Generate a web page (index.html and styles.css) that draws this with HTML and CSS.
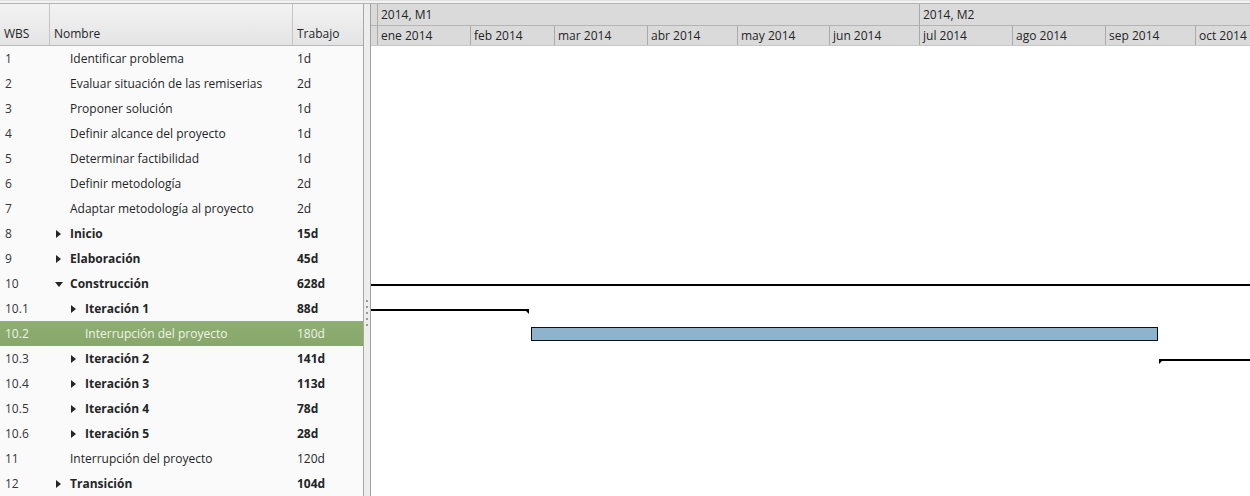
FILE: index.html
```html
<!DOCTYPE html>
<html lang="es">
<head>
<meta charset="utf-8">
<title>Gantt</title>
<link rel="stylesheet" href="styles.css">
</head>
<body>
<div class="frame-top"></div>
<div class="app">
  <section class="tree">
    <div class="thead">
      <div class="th c-wbs">WBS</div>
      <div class="th c-name">Nombre</div>
      <div class="th c-work">Trabajo</div>
    </div>
    <div class="tbody">
      <div class="row"><div class="c-wbs">1</div><div class="c-name l1"><span class="tw"></span>Identificar problema</div><div class="c-work">1d</div></div>
      <div class="row"><div class="c-wbs">2</div><div class="c-name l1"><span class="tw"></span>Evaluar situación de las remiserias</div><div class="c-work">2d</div></div>
      <div class="row"><div class="c-wbs">3</div><div class="c-name l1"><span class="tw"></span>Proponer solución</div><div class="c-work">1d</div></div>
      <div class="row"><div class="c-wbs">4</div><div class="c-name l1"><span class="tw"></span>Definir alcance del proyecto</div><div class="c-work">1d</div></div>
      <div class="row"><div class="c-wbs">5</div><div class="c-name l1"><span class="tw"></span>Determinar factibilidad</div><div class="c-work">1d</div></div>
      <div class="row"><div class="c-wbs">6</div><div class="c-name l1"><span class="tw"></span>Definir metodología</div><div class="c-work">2d</div></div>
      <div class="row"><div class="c-wbs">7</div><div class="c-name l1"><span class="tw"></span>Adaptar metodología al proyecto</div><div class="c-work">2d</div></div>
      <div class="row group"><div class="c-wbs">8</div><div class="c-name l1"><span class="tw right"></span>Inicio</div><div class="c-work">15d</div></div>
      <div class="row group"><div class="c-wbs">9</div><div class="c-name l1"><span class="tw right"></span>Elaboración</div><div class="c-work">45d</div></div>
      <div class="row group"><div class="c-wbs">10</div><div class="c-name l1"><span class="tw down"></span>Construcción</div><div class="c-work">628d</div></div>
      <div class="row group"><div class="c-wbs">10.1</div><div class="c-name l2"><span class="tw right"></span>Iteración 1</div><div class="c-work">88d</div></div>
      <div class="row selected"><div class="c-wbs">10.2</div><div class="c-name l2"><span class="tw"></span>Interrupción del proyecto</div><div class="c-work">180d</div></div>
      <div class="row group"><div class="c-wbs">10.3</div><div class="c-name l2"><span class="tw right"></span>Iteración 2</div><div class="c-work">141d</div></div>
      <div class="row group"><div class="c-wbs">10.4</div><div class="c-name l2"><span class="tw right"></span>Iteración 3</div><div class="c-work">113d</div></div>
      <div class="row group"><div class="c-wbs">10.5</div><div class="c-name l2"><span class="tw right"></span>Iteración 4</div><div class="c-work">78d</div></div>
      <div class="row group"><div class="c-wbs">10.6</div><div class="c-name l2"><span class="tw right"></span>Iteración 5</div><div class="c-work">28d</div></div>
      <div class="row"><div class="c-wbs">11</div><div class="c-name l1"><span class="tw"></span>Interrupción del proyecto</div><div class="c-work">120d</div></div>
      <div class="row group"><div class="c-wbs">12</div><div class="c-name l1"><span class="tw right"></span>Transición</div><div class="c-work">104d</div></div>
    </div>
  </section>
  <div class="splitter"><span class="dots"><i></i><i></i><i></i><i></i><i></i></span></div>
  <section class="gantt">
    <div class="ghead">
      <div class="grow top">
        <div class="gcell lead"></div>
        <div class="gcell" style="width:542px">2014, M1</div>
        <div class="gcell fill">2014, M2</div>
      </div>
      <div class="grow bottom">
        <div class="gcell lead"></div>
        <div class="gcell" style="width:93px">ene 2014</div>
        <div class="gcell" style="width:84px">feb 2014</div>
        <div class="gcell" style="width:93px">mar 2014</div>
        <div class="gcell" style="width:90px">abr 2014</div>
        <div class="gcell" style="width:92px">may 2014</div>
        <div class="gcell" style="width:90px">jun 2014</div>
        <div class="gcell" style="width:93px">jul 2014</div>
        <div class="gcell" style="width:93px">ago 2014</div>
        <div class="gcell" style="width:90px">sep 2014</div>
        <div class="gcell fill">oct 2014</div>
      </div>
    </div>
    <div class="gbody">
      <div class="summary full" style="top:238px"></div>
      <div class="summary end-tick" style="top:263px;left:0;width:158px"></div>
      <div class="task" style="top:281px;left:160px;width:627px"></div>
      <div class="summary start-tick" style="top:313px;left:788px;right:0"></div>
    </div>
  </section>
</div>
</body>
</html>
```

FILE: styles.css
```css
* { box-sizing: border-box; }

html, body {
  margin: 0;
  padding: 0;
}

body {
  width: 1250px;
  height: 496px;
  overflow: hidden;
  background: #efefef;
  font-family: "Open Sans", "DejaVu Sans", sans-serif;
  font-size: 12px;
  color: #232627;
}

.frame-top {
  height: 4px;
  background: #f2f2f2;
  border-top: 1px solid #e2e2e2;
  border-bottom: 1px solid #b4b4b4;
}

.app {
  display: flex;
  height: 492px;
}

/* ---------- tree ---------- */
.tree {
  width: 364px;
  flex: none;
  display: flex;
  flex-direction: column;
  background: #fafafa;
  border-right: 1px solid #a8a8a8;
}

.thead {
  display: flex;
  height: 42px;
  border-bottom: 1px solid #b8b8b8;
  background: linear-gradient(#f3f3f3, #e4e4e4);
}

.th {
  display: flex;
  align-items: flex-end;
  padding-bottom: 3px;
  border-right: 1px solid #c4c4c4;
}

.th.c-wbs { padding-left: 4px; }
.th.c-name { padding-left: 4px; }
.th.c-work { padding-left: 4px; border-right: none; }

.c-wbs { width: 50px; flex: none; }
.c-name { width: 243px; flex: none; }
.c-work { flex: 1; }

.tbody {
  display: flex;
  flex-direction: column;
}

.row {
  display: flex;
  align-items: center;
  height: 25px;
  white-space: nowrap;
}

.row .c-wbs { padding-left: 5px; color: #31363b; }
.row .c-work { padding-left: 4px; }

.row .c-name {
  display: flex;
  align-items: center;
}

.c-name.l1 { padding-left: 5px; }
.c-name.l2 { padding-left: 20px; }

.tw {
  width: 15px;
  height: 10px;
  flex: none;
  position: relative;
}

.tw.right::before {
  content: "";
  position: absolute;
  left: 1px;
  top: 1px;
  border-style: solid;
  border-width: 4px 0 4px 5px;
  border-color: transparent transparent transparent #232627;
}

.tw.down::before {
  content: "";
  position: absolute;
  left: 0;
  top: 3px;
  border-style: solid;
  border-width: 5px 4px 0 4px;
  border-color: #232627 transparent transparent transparent;
}

.row.group .c-name,
.row.group .c-work { font-weight: bold; }

.row.selected {
  background: linear-gradient(#8fae72, #87a86a);
  color: #eef3e8;
}

.row.selected .c-wbs { color: #eef3e8; }

/* ---------- splitter ---------- */
.splitter {
  width: 7px;
  flex: none;
  background: #ededed;
  border-right: 1px solid #a0a0a0;
  display: flex;
  justify-content: center;
  padding-top: 296px;
}

.dots {
  display: flex;
  flex-direction: column;
  gap: 4px;
}

.dots i {
  display: block;
  width: 2px;
  height: 2px;
  background: #9a9a9a;
}

/* ---------- gantt ---------- */
.gantt {
  flex: 1;
  display: flex;
  flex-direction: column;
  background: #fff;
  overflow: hidden;
}

.ghead {
  background: #dadada;
  flex: none;
}

.grow {
  display: flex;
  white-space: nowrap;
}

.grow.top {
  height: 22px;
  border-bottom: 1px solid #b4b4b4;
}

.grow.bottom {
  height: 20px;
  border-bottom: 1px solid #c8c8c8;
}

.gcell {
  flex: none;
  border-right: 1px solid #aaaaaa;
  padding-left: 3px;
  display: flex;
  align-items: center;
  overflow: hidden;
}

.gcell.lead {
  width: 7px;
  padding: 0;
}

.gcell.fill {
  flex: 1;
  border-right: none;
}

.gbody {
  flex: 1;
  position: relative;
}

.summary {
  position: absolute;
  height: 2px;
  background: #000;
}

.summary.full {
  left: 0;
  right: 0;
}

.summary.end-tick::after {
  content: "";
  position: absolute;
  right: 0;
  top: 2px;
  border-style: solid;
  border-width: 0 3px 3px 0;
  border-color: transparent #000 transparent transparent;
}

.summary.start-tick::before {
  content: "";
  position: absolute;
  left: 0;
  top: 2px;
  border-style: solid;
  border-width: 3px 3px 0 0;
  border-color: #000 transparent transparent transparent;
}

.task {
  position: absolute;
  height: 14px;
  background: #8db4cc;
  border: 1px solid #111;
}
```
